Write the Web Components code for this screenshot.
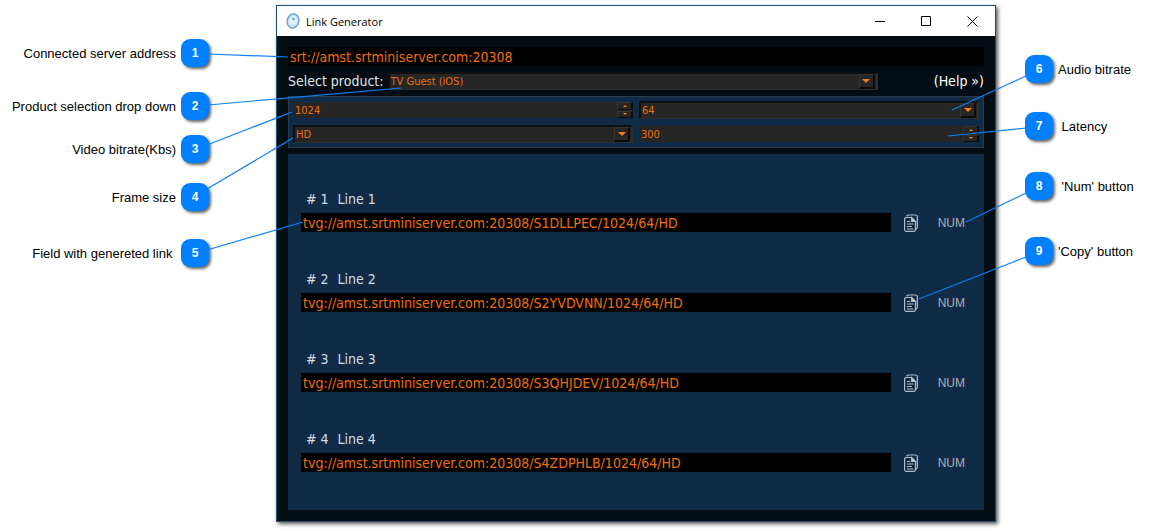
<!DOCTYPE html>
<html lang="en">
<head>
<meta charset="utf-8">
<title>Link Generator</title>
<style>
  body { margin: 0; background: #fff; }
</style>
</head>
<body>
<annotated-figure>
  <call-out slot="left" side="left" num="1" style="--gap:39px">Connected server address</call-out>
  <call-out slot="left" side="left" num="2" style="--gap:25px">Product selection drop down</call-out>
  <call-out slot="left" side="left" num="3" style="--gap:15px">Video bitrate(Kbs)</call-out>
  <call-out slot="left" side="left" num="4" style="--gap:20px">Frame size</call-out>
  <call-out slot="left" side="left" num="5" style="--gap:28px">Field with genereted link&nbsp;</call-out>

  <link-window heading="Link Generator">
    <link-row num="1" code="S1DLLPEC"></link-row>
    <link-row num="2" code="S2YVDVNN"></link-row>
    <link-row num="3" code="S3QHJDEV"></link-row>
    <link-row num="4" code="S4ZDPHLB"></link-row>
  </link-window>

  <call-out slot="right" side="right" num="6" style="--gap:55px">Audio bitrate</call-out>
  <call-out slot="right" side="right" num="7" style="--gap:29px">&nbsp;Latency</call-out>
  <call-out slot="right" side="right" num="8" style="--gap:32px">&nbsp;'Num' button</call-out>
  <call-out slot="right" side="right" num="9" style="--gap:37px">'Copy' button</call-out>
</annotated-figure>

<script>
const define = (name, html, setup) => {
  const tpl = document.createElement('template');
  tpl.innerHTML = html;
  customElements.define(name, class extends HTMLElement {
    constructor() {
      super();
      this.attachShadow({ mode: 'open' }).append(tpl.content.cloneNode(true));
    }
    connectedCallback() {
      if (setup && !this.ready) { this.ready = true; setup(this, this.shadowRoot); }
    }
  });
};

/* Numbered badge with its caption */
define('call-out', `
<style>
  :host { display: flex; align-items: center; gap: 5px; height: 28px; margin-top: var(--gap);
          font: 13px "Liberation Sans", Arial, sans-serif; color: #000; white-space: nowrap; }
  :host([side="left"]) { flex-direction: row-reverse; }
  b { flex: none; width: 28px; height: 28px; border-radius: 9px; background: #0080ff; color: #fff;
      font-size: 12px; text-align: center; line-height: 28px; box-shadow: 2px 2px 3px rgba(0,0,0,.6); }
</style>
<b></b><span><slot></slot></span>`, (el, root) => {
  root.querySelector('b').textContent = el.getAttribute('num');
});

/* Three columns; leader lines start in the side columns and reach over the window */
define('annotated-figure', `
<style>
  :host { display: grid; grid-template-columns: 276px minmax(0, 1fr) 153px; align-items: start; min-height: 100vh; }
  .side { position: relative; display: flex; flex-direction: column; }
  .left { padding-right: 67px; }
  .right { padding-left: 29px; }
  .mid { padding: 5px 0 9px; }
  svg { position: absolute; left: 0; top: 0; width: 100%; height: 100%; overflow: visible;
        pointer-events: none; z-index: 2; stroke: #0b80f5; stroke-width: 1.2; }
</style>
<div class="side left">
  <slot name="left"></slot>
  <svg aria-hidden="true">
    <path d="M208 54L288 57M208 105L401 88M207 145L292 112M207 189L293 138M207 250L303 222"/>
  </svg>
</div>
<div class="mid"><slot></slot></div>
<div class="side right">
  <slot name="right"></slot>
  <svg aria-hidden="true">
    <path d="M30 76L-44 110M30 128L-48 136M30 193L-30 222M30 257L-77 299"/>
  </svg>
</div>`);

/* Drop-down with an embossed arrow */
define('pick-list', `
<style>
  :host { display: grid; grid-template-columns: minmax(0, 1fr) 19px; box-sizing: border-box; height: 18px;
          background: #262626; border: 2px solid #0e0f10; border-right-color: #2d2e2e; border-bottom-color: #2d2e2e;
          border-bottom-width: 1px; }
  select { grid-area: 1 / 1 / 2 / 3; appearance: none; border: 0; margin: 0; padding: 0 1px; background: none;
           color: #ee6f0a; font: inherit; outline: none; min-width: 0; }
  i { grid-area: 1 / 2; box-sizing: border-box; margin: 0 1px 0 2px; border: 1px solid #333;
      border-right: 2px solid #0c0c0c; border-bottom: 2px solid #0c0c0c;
      display: flex; align-items: center; justify-content: center; pointer-events: none; }
  svg { width: 8px; height: 4px; fill: #f87a10; }
</style>
<select><option></option></select>
<i><svg viewBox="0 0 8 4"><path d="M0 0h8L4 4z"/></svg></i>`, (el, root) => {
  root.querySelector('option').textContent = el.getAttribute('value');
  root.querySelector('select').setAttribute('aria-label', el.getAttribute('label'));
});

/* Number field with two step buttons */
define('spin-box', `
<style>
  :host { display: grid; grid-template-columns: minmax(0, 1fr) 16px; background: #262626; height: 16px; }
  input { border: 0; margin: 0; padding: 0 2px; background: none; color: #ee6f0a; font: inherit; outline: none; min-width: 0; }
  div { display: grid; grid-template-rows: 1fr 1fr; gap: 1px; }
  button { display: flex; align-items: center; justify-content: center; min-height: 0; margin: 0; padding: 0;
           background: #262626; border: 1px solid #333; border-right: 2px solid #0c0c0c; border-bottom: 1px solid #0c0c0c; }
  svg { width: 4px; height: 2px; fill: #f87a10; flex: none; }
</style>
<input type="text" inputmode="numeric">
<div>
  <button aria-label="Increase"><svg viewBox="0 0 4 2"><path d="M0 2h4L2 0z"/></svg></button>
  <button aria-label="Decrease"><svg viewBox="0 0 4 2"><path d="M0 0h4L2 2z"/></svg></button>
</div>`, (el, root) => {
  const input = root.querySelector('input');
  input.value = el.getAttribute('value');
  input.setAttribute('aria-label', el.getAttribute('label'));
  const [up, down] = root.querySelectorAll('button');
  up.onclick = () => { input.value = +input.value + 1; };
  down.onclick = () => { input.value = +input.value - 1; };
});

/* One generated link with its copy and NUM buttons */
define('link-row', `
<style>
  :host { display: grid; grid-template-columns: minmax(0, 1fr) 27px 47px; row-gap: 4px; align-items: center; }
  label { grid-column: 1 / -1; display: flex; gap: 9px; padding-left: 5px; height: 20px; line-height: 20px; color: #d5dbe0; }
  input { box-sizing: border-box; width: 100%; height: 19px; border: 0; padding: 0 2px; margin: 0; background: #000; color: #ee6f0a;
          font: inherit; outline: none; }
  button { border: 0; padding: 0; margin: 0; background: none; color: #a9b2ba; display: block; justify-self: end; }
  .num { font: 12px "Liberation Sans", Arial, sans-serif; }
  svg { display: block; width: 14px; height: 18px; fill: none; stroke: #b4bcc4; stroke-width: 1.2; }
</style>
<label for="link"><span></span><span></span></label>
<input id="link" type="text" readonly>
<button class="copy" aria-label="Copy">
  <svg viewBox="0 0 14 18">
    <path d="M3 2.500V2Q3 1 4.500 1H11.500Q13.400 1 13.400 3V13Q13.400 15 11.500 15.500"/>
    <path d="M2.500 3.500H7.500L11.500 7.500V15.500Q11.500 17.300 9.500 17.300H2.500Q.6 17.300 .6 15.500V5.500Q.6 3.500 2.500 3.500Z"/>
    <path d="M7.500 3.500V7.500H11.500Z" fill="#c8ced4"/>
    <path d="M3 7.500H6M3 10H9.500M3 12.500H8M3 15H9.500"/>
  </svg>
</button>
<button class="num">NUM</button>`, (el, root) => {
  const n = el.getAttribute('num');
  const [index, name] = root.querySelectorAll('span');
  index.textContent = '# ' + n;
  name.textContent = 'Line ' + n;
  const input = root.querySelector('input');
  input.value = 'tvg://amst.srtminiserver.com:20308/' + el.getAttribute('code') + '/1024/64/HD';
  root.querySelector('.copy').onclick = () => input.select();
});

/* Application window */
define('link-window', `
<style>
  :host { display: block; border: 1px solid #1c4f6b; border-right-color: #3a3f44; background: #050d14;
          box-shadow: 2px 2px 4px rgba(0,0,0,.65); font: 14px "DejaVu Sans Condensed", "DejaVu Sans", sans-serif; color: #dfe3e6; }
  header { display: flex; align-items: center; height: 30px; background: #fff; color: #000; padding-left: 9px; }
  h1 { flex: 1; margin: 0 0 0 6px; font: 11px "Open Sans", "Noto Sans", sans-serif; }
  header button { width: 46px; height: 30px; border: 0; padding: 0; margin: 0; background: none; display: flex;
                  align-items: center; justify-content: center; }
  header button svg { width: 11px; height: 11px; fill: none; stroke: #000; }
  main { padding: 11px; }
  .server { display: block; box-sizing: border-box; width: 100%; height: 19px; border: 0; margin: 0; padding: 0 2px;
            background: #000; color: #ee6f0a; font: inherit; outline: none; }
  .product { display: flex; align-items: center; height: 18px; margin: 6px 0; }
  .product pick-list { flex: 1; margin: 0 56px 0 4px; }
  a { color: #fff; text-decoration: none; }
  pick-list, spin-box { font-size: 11px; }
  .opts { display: grid; grid-template-columns: 1fr 1fr; gap: 6px; align-items: center; padding: 4px; border: 1px solid #2c3a47;
          background: #0f2b46; }
  .links { margin-top: 6px; padding: 35px 19px 38px 13px; background: #0f2b46; display: flex; flex-direction: column; gap: 37px; }
</style>
<header>
  <svg width="14" height="16" viewBox="0 0 14 16" aria-hidden="true">
    <ellipse cx="7" cy="8" rx="5.800" ry="7.200" fill="#c2e0f5" stroke="#6fa3cc" stroke-width="1.400" transform="rotate(14 7 8)"/>
    <ellipse cx="7" cy="7.500" rx="4" ry="4.800" fill="#e2f2fc" transform="rotate(14 7 8)"/>
    <path d="M5.500 4.500L9 5.500L7.500 8Z" fill="#5f9bcb"/>
  </svg>
  <h1></h1>
  <button aria-label="Minimize"><svg><path d="M0 5.500H10"/></svg></button>
  <button aria-label="Maximize"><svg><path d="M.5 .5H9.500V9.500H.5Z"/></svg></button>
  <button aria-label="Close"><svg><path d="M.5 .5L10.500 10.500M10.500 .5L.5 10.500"/></svg></button>
</header>
<main>
  <input class="server" type="text" readonly aria-label="Connected server address" value="srt://amst.srtminiserver.com:20308">
  <div class="product">
    <span>Select product:</span>
    <pick-list label="Select product" value="TV Guest (iOS)"></pick-list>
    <a href="#help">(Help »)</a>
  </div>
  <div class="opts">
    <spin-box label="Video bitrate" value="1024"></spin-box>
    <pick-list label="Audio bitrate" value="64"></pick-list>
    <pick-list label="Frame size" value="HD"></pick-list>
    <spin-box label="Latency" value="300"></spin-box>
  </div>
  <div class="links"><slot></slot></div>
</main>`, (el, root) => {
  root.querySelector('h1').textContent = el.getAttribute('heading');
});
</script>
</body>
</html>
